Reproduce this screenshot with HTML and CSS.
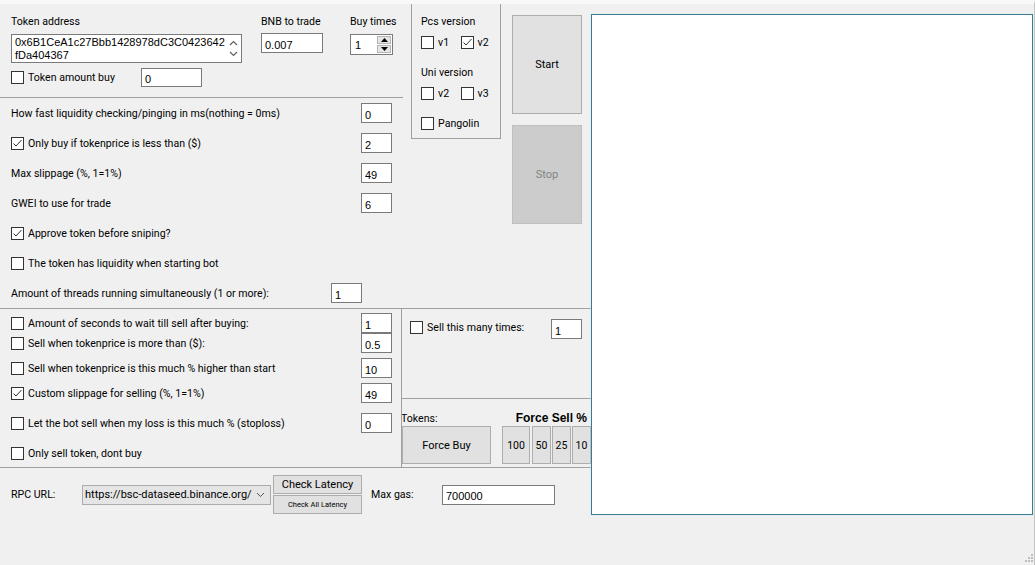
FILE: index.html
```html
<!DOCTYPE html>
<html>

<head>
    <title>Sniper bot</title>
    <link rel="stylesheet" href="styles.css">
</head>

<body>
    <div class="window">
        <div class="main">
            <div class="upper">
                <div class="settings">
                    <div class="buy-head">
                        <div class="token-col">
                            <div class="lbl">Token address</div>
                            <div class="address">
                                <div class="address-text">0x6B1CeA1c27Bbb1428978dC3C0423642<br>fDa404367</div>
                                <div class="address-scroll">
                                    <svg width="9" height="6" viewBox="0 0 9 6"><polyline points="1,5 4.5,1.5 8,5" fill="none" stroke="#606060" stroke-width="1.2"/></svg>
                                    <svg width="9" height="6" viewBox="0 0 9 6"><polyline points="1,1 4.5,4.5 8,1" fill="none" stroke="#606060" stroke-width="1.2"/></svg>
                                </div>
                            </div>
                            <div class="amount-row">
                                <label class="cb"><span class="box"></span>Token amount buy</label>
                                <input class="field amount" type="text" value="0">
                            </div>
                        </div>
                        <div class="bnb-col">
                            <div class="lbl">BNB to trade</div>
                            <input class="field bnb" type="text" value="0.007">
                        </div>
                        <div class="times-col">
                            <div class="lbl">Buy times</div>
                            <div class="spinner">
                                <span class="spin-value">1</span>
                                <span class="spin-btns">
                                    <span class="spin-btn"><svg width="7" height="4" viewBox="0 0 7 4"><polygon points="0,4 3.5,0 7,4" fill="#000"/></svg></span>
                                    <span class="spin-btn"><svg width="7" height="4" viewBox="0 0 7 4"><polygon points="0,0 3.5,4 7,0" fill="#000"/></svg></span>
                                </span>
                            </div>
                        </div>
                    </div>

                    <div class="row">
                        <span class="text">How fast liquidity checking/pinging in ms(nothing = 0ms)</span>
                        <input class="field small" type="text" value="0">
                    </div>
                    <div class="row">
                        <label class="cb"><span class="box on"><svg width="11" height="11" viewBox="0 0 11 11"><polyline points="1.5,5.5 4,8 9.5,2" fill="none" stroke="#333" stroke-width="1"/></svg></span>Only buy if tokenprice is less than ($)</label>
                        <input class="field small" type="text" value="2">
                    </div>
                    <div class="row">
                        <span class="text">Max slippage (%, 1=1%)</span>
                        <input class="field small" type="text" value="49">
                    </div>
                    <div class="row">
                        <span class="text">GWEI to use for trade</span>
                        <input class="field small" type="text" value="6">
                    </div>
                    <div class="row">
                        <label class="cb"><span class="box on"><svg width="11" height="11" viewBox="0 0 11 11"><polyline points="1.5,5.5 4,8 9.5,2" fill="none" stroke="#333" stroke-width="1"/></svg></span>Approve token before sniping?</label>
                    </div>
                    <div class="row">
                        <label class="cb"><span class="box"></span>The token has liquidity when starting bot</label>
                    </div>
                    <div class="row">
                        <span class="text">Amount of threads running simultaneously (1 or more):</span>
                        <input class="field small threads" type="text" value="1">
                    </div>
                </div>

                <div class="side">
                    <div class="versions">
                        <div class="lbl">Pcs version</div>
                        <div class="ver-row">
                            <label class="cb ver"><span class="box"></span>v1</label>
                            <label class="cb ver"><span class="box on"><svg width="11" height="11" viewBox="0 0 11 11"><polyline points="1.5,5.5 4,8 9.5,2" fill="none" stroke="#333" stroke-width="1"/></svg></span>v2</label>
                        </div>
                        <div class="lbl uni">Uni version</div>
                        <div class="ver-row">
                            <label class="cb ver"><span class="box"></span>v2</label>
                            <label class="cb ver"><span class="box"></span>v3</label>
                        </div>
                        <div class="ver-row pango">
                            <label class="cb"><span class="box"></span>Pangolin</label>
                        </div>
                    </div>
                    <div class="actions">
                        <button class="btn big">Start</button>
                        <button class="btn big stop">Stop</button>
                    </div>
                </div>
            </div>

            <div class="sell">
                <div class="sell-list">
                    <div class="srow first">
                        <label class="cb"><span class="box"></span>Amount of seconds to wait till sell after buying:</label>
                        <input class="field small" type="text" value="1">
                    </div>
                    <div class="srow">
                        <label class="cb"><span class="box"></span>Sell when tokenprice is more than ($):</label>
                        <input class="field small" type="text" value="0.5">
                    </div>
                    <div class="srow gap5">
                        <label class="cb"><span class="box"></span>Sell when tokenprice is this much % higher than start</label>
                        <input class="field small" type="text" value="10">
                    </div>
                    <div class="srow gap5">
                        <label class="cb"><span class="box on"><svg width="11" height="11" viewBox="0 0 11 11"><polyline points="1.5,5.5 4,8 9.5,2" fill="none" stroke="#333" stroke-width="1"/></svg></span>Custom slippage for selling (%, 1=1%)</label>
                        <input class="field small" type="text" value="49">
                    </div>
                    <div class="srow gap10">
                        <label class="cb"><span class="box"></span>Let the bot sell when my loss is this much % (stoploss)</label>
                        <input class="field small" type="text" value="0">
                    </div>
                    <div class="srow gap10">
                        <label class="cb"><span class="box"></span>Only sell token, dont buy</label>
                    </div>
                </div>
                <div class="sell-side">
                    <div class="sell-times">
                        <label class="cb"><span class="box"></span>Sell this many times:</label>
                        <input class="field small" type="text" value="1">
                    </div>
                    <div class="force">
                        <div class="force-head">
                            <span>Tokens:</span>
                            <span class="force-title">Force Sell %</span>
                        </div>
                        <div class="force-btns">
                            <button class="btn buy">Force Buy</button>
                            <button class="btn pct p100">100</button>
                            <button class="btn pct">50</button>
                            <button class="btn pct">25</button>
                            <button class="btn pct">10</button>
                        </div>
                    </div>
                </div>
            </div>

            <div class="rpc">
                <span class="rpc-lbl">RPC URL:</span>
                <div class="combo">
                    <span class="combo-text">https://bsc-dataseed.binance.org/</span>
                    <svg width="9" height="6" viewBox="0 0 9 6"><polyline points="1,1 4.5,4.5 8,1" fill="none" stroke="#555" stroke-width="1"/></svg>
                </div>
                <div class="latency">
                    <button class="btn lat">Check Latency</button>
                    <button class="btn lat all">Check All Latency</button>
                </div>
                <span class="rpc-lbl gas">Max gas:</span>
                <input class="field gas-input" type="text" value="700000">
            </div>
        </div>

        <div class="log"></div>

        <svg class="grip" width="10" height="10" viewBox="0 0 10 10">
            <rect x="8" y="0" width="2" height="2" fill="#bdbdbd"/>
            <rect x="5" y="3" width="2" height="2" fill="#bdbdbd"/>
            <rect x="8" y="3" width="2" height="2" fill="#bdbdbd"/>
            <rect x="2" y="6" width="2" height="2" fill="#bdbdbd"/>
            <rect x="5" y="6" width="2" height="2" fill="#bdbdbd"/>
            <rect x="8" y="6" width="2" height="2" fill="#bdbdbd"/>
        </svg>
    </div>
</body>

</html>
```

FILE: styles.css
```css
* {
    box-sizing: border-box;
}

body {
    margin: 0;
    background: #f0f0f0;
    font-family: Roboto, "Liberation Sans", sans-serif;
    font-size: 10.6px;
    color: #000;
}

.window {
    position: relative;
    display: flex;
    height: 565px;
    border-top: 4px solid #f8f8f8;
    border-right: 1px solid #c4c4c4;
}

.main {
    width: 591px;
    flex-shrink: 0;
    margin-top: -4px;
    display: flex;
    flex-direction: column;
}

/* shared controls */

.lbl {
    height: 14px;
    line-height: 14px;
    margin-top: 1px;
    white-space: nowrap;
}

.text {
    white-space: nowrap;
}

.field {
    border: 1px solid #7a7a7a;
    background: #fff;
    font-family: "Liberation Sans", sans-serif;
    font-size: 11px;
    padding: 3px 0 0 3px;
    margin: 0;
    color: #000;
    outline: none;
}

.field.small {
    width: 31px;
    height: 20px;
    margin-left: auto;
    flex-shrink: 0;
}

.cb {
    display: flex;
    align-items: center;
    white-space: nowrap;
}

.box {
    width: 13px;
    height: 13px;
    border: 1px solid #333;
    background: #fff;
    margin-right: 4px;
    display: flex;
    align-items: center;
    justify-content: center;
    flex-shrink: 0;
}

.btn {
    background: #e1e1e1;
    border: 1px solid #adadad;
    font-family: Roboto, "Liberation Sans", sans-serif;
    font-size: 11px;
    color: #000;
    padding: 0;
    margin: 0;
    flex-shrink: 0;
}

/* upper part */

.upper {
    display: flex;
    height: 309px;
    border-bottom: 1px solid #a0a0a0;
}

.settings {
    width: 403px;
    flex-shrink: 0;
}

.buy-head {
    height: 98px;
    border-bottom: 1px solid #a0a0a0;
    display: flex;
    padding: 14px 0 0 11px;
}

.token-col {
    width: 231px;
}

.address {
    margin-top: 5px;
    height: 29px;
    border: 1px solid #7a7a7a;
    background: #fff;
    display: flex;
}

.address-text {
    flex: 1;
    font-family: "Liberation Sans", sans-serif;
    font-size: 11px;
    line-height: 13px;
    padding: 1px 0 0 3px;
    overflow: hidden;
}

.address-scroll {
    width: 15px;
    display: flex;
    flex-direction: column;
    justify-content: space-around;
    align-items: center;
    padding: 3px 0;
}

.address-scroll svg {
    display: block;
}

.amount-row {
    display: flex;
    align-items: center;
    margin-top: 5px;
    height: 19px;
}

.amount-row .cb {
    width: 130px;
}

.field.amount {
    width: 61px;
    height: 19px;
}

.bnb-col {
    margin-left: 19px;
    width: 89px;
}

.field.bnb {
    display: block;
    margin-top: 4px;
    width: 62px;
    height: 20px;
}

.spinner {
    margin-top: 5px;
    width: 43px;
    height: 21px;
    border: 1px solid #7a7a7a;
    background: #fff;
    display: flex;
}

.spin-value {
    flex: 1;
    font-family: "Liberation Sans", sans-serif;
    font-size: 11px;
    padding: 4px 0 0 4px;
}

.spin-btns {
    width: 16px;
    display: flex;
    flex-direction: column;
    padding: 1px;
    gap: 1px;
}

.spin-btn {
    flex: 1;
    background: #e5e5e5;
    border: 1px solid #b5b5b5;
    display: flex;
    align-items: center;
    justify-content: center;
}

.spin-btn svg {
    display: block;
}

.row {
    height: 30px;
    display: flex;
    align-items: center;
    padding: 0 11px;
}

.field.threads {
    margin-right: 30px;
}

.side {
    flex: 1;
    display: flex;
    padding-left: 8px;
}

.versions {
    margin-top: 4px;
    width: 90px;
    height: 135px;
    border: 1px solid #a0a0a0;
    border-top: none;
    padding: 10px 0 0 9px;
}

.ver-row {
    display: flex;
    height: 13px;
    margin-top: 7px;
}

.ver {
    width: 40px;
}

.uni {
    margin-top: 17px;
}

.ver-row.pango {
    margin-top: 17px;
}

.actions {
    margin-left: 11px;
    display: flex;
    flex-direction: column;
}

.btn.big {
    width: 70px;
    height: 99px;
    margin-top: 15px;
}

.btn.stop {
    margin-top: 11px;
    background: #cccccc;
    border-color: #bfbfbf;
    color: #838383;
}

/* sell part */

.sell {
    display: flex;
    height: 159px;
    border-bottom: 1px solid #a0a0a0;
}

.sell-list {
    width: 402px;
    flex-shrink: 0;
    border-right: 1px solid #a0a0a0;
}

.srow {
    height: 20px;
    display: flex;
    align-items: center;
    padding: 0 9px 0 11px;
}

.srow.first {
    margin-top: 4px;
}

.srow.gap5 {
    margin-top: 5px;
}

.srow.gap10 {
    margin-top: 10px;
}

.sell-side {
    flex: 1;
    display: flex;
    flex-direction: column;
    overflow: hidden;
}

.sell-times {
    height: 90px;
    border-bottom: 1px solid #a0a0a0;
    display: flex;
    align-items: flex-start;
    padding: 10px 9px 0 8px;
}

.sell-times .cb {
    margin-top: 2px;
    height: 13px;
}

.force-head {
    display: flex;
    justify-content: space-between;
    align-items: center;
    height: 16px;
    margin: 11px 4px 0 -1px;
}

.force-title {
    font-family: "Liberation Sans", sans-serif;
    font-weight: bold;
    font-size: 12px;
}

.force-btns {
    display: flex;
    gap: 1px;
}

.btn.buy {
    width: 89px;
    height: 38px;
    margin-right: 10px;
}

.btn.pct {
    width: 19px;
    height: 38px;
    font-size: 10.5px;
}

.btn.p100 {
    width: 28px;
    margin-right: 1px;
}

/* rpc line */

.rpc {
    display: flex;
    align-items: center;
    padding: 7px 0 0 11px;
}

.rpc-lbl {
    width: 71px;
    flex-shrink: 0;
}

.combo {
    width: 189px;
    height: 20px;
    background: #e5e5e5;
    border: 1px solid #acacac;
    display: flex;
    align-items: center;
    justify-content: space-between;
    padding: 0 5px 0 2px;
    flex-shrink: 0;
}

.combo-text {
    white-space: nowrap;
    overflow: hidden;
    font-size: 11px;
}

.latency {
    margin-left: 2px;
    display: flex;
    flex-direction: column;
    gap: 1px;
}

.btn.lat {
    width: 89px;
    height: 19px;
}

.btn.all {
    font-size: 7.5px;
}

.rpc-lbl.gas {
    margin-left: 9px;
}

.field.gas-input {
    width: 113px;
    height: 20px;
}

/* log box */

.log {
    width: 442px;
    height: 501px;
    margin-top: 10px;
    background: #fff;
    border: 1px solid #3b7a91;
    box-shadow: 0 0 2px #cdeef5;
}

.grip {
    position: absolute;
    right: 1px;
    bottom: 1px;
}
```
